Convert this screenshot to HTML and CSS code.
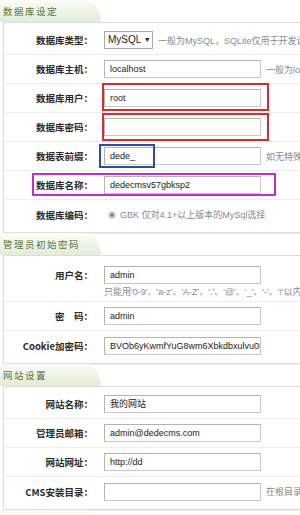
FILE: index.html
```html
<!DOCTYPE html>
<html lang="zh-CN">
<head>
    <meta charset="UTF-8">
    <meta name="viewport" content="width=device-width, initial-scale=1.0">
    <link rel="stylesheet" href="styles.css">
</head>
<body>
    <div class="page">
        <div class="sect-title"><span>数据库设定</span></div>
        <div class="panel">
            <div class="row">
                <div class="label">数据库类型：</div>
                <div class="field">
                    <span class="select">MySQL <i>▼</i></span>
                    <span class="hint">一般为MySQL，SQLite仅用于开发调试</span>
                </div>
            </div>
            <div class="row">
                <div class="label">数据库主机：</div>
                <div class="field">
                    <span class="input">localhost</span>
                    <span class="hint">一般为localhost</span>
                </div>
            </div>
            <div class="row">
                <div class="label">数据库用户：</div>
                <div class="field">
                    <span class="input">root</span>
                </div>
                <div class="mark red mark-user"></div>
            </div>
            <div class="row">
                <div class="label">数据库密码：</div>
                <div class="field">
                    <span class="input"></span>
                </div>
                <div class="mark red mark-pwd"></div>
            </div>
            <div class="row">
                <div class="label">数据表前缀：</div>
                <div class="field">
                    <span class="input">dede_</span>
                    <span class="hint">如无特殊需要,请不要修改</span>
                </div>
                <div class="mark blue mark-prefix"></div>
            </div>
            <div class="row">
                <div class="label">数据库名称：</div>
                <div class="field">
                    <span class="input">dedecmsv57gbksp2</span>
                </div>
                <div class="mark magenta mark-name"></div>
            </div>
            <div class="row last">
                <div class="label">数据库编码：</div>
                <div class="field">
                    <span class="radio"></span>
                    <span class="hint">GBK 仅对4.1+以上版本的MySql选择</span>
                </div>
            </div>
        </div>

        <div class="sect-title"><span>管理员初始密码</span></div>
        <div class="panel">
            <div class="row tall">
                <div class="label">用户名：</div>
                <div class="field stack">
                    <span class="input">admin</span>
                    <span class="hint">只能用'0-9'、'a-z'、'A-Z'、'.'、'@'、'_'、'-'、'!'以内范围的字符</span>
                </div>
            </div>
            <div class="row">
                <div class="label">密　码：</div>
                <div class="field">
                    <span class="input">admin</span>
                </div>
            </div>
            <div class="row last">
                <div class="label">Cookie加密码：</div>
                <div class="field">
                    <span class="input">BVOb6yKwmfYuG8wm6Xbkdbxulvu0I</span>
                </div>
            </div>
        </div>

        <div class="sect-title"><span>网站设置</span></div>
        <div class="panel">
            <div class="row">
                <div class="label">网站名称：</div>
                <div class="field">
                    <span class="input">我的网站</span>
                </div>
            </div>
            <div class="row">
                <div class="label">管理员邮箱：</div>
                <div class="field">
                    <span class="input">admin@dedecms.com</span>
                </div>
            </div>
            <div class="row">
                <div class="label">网站网址：</div>
                <div class="field">
                    <span class="input">http://dd</span>
                </div>
            </div>
            <div class="row last">
                <div class="label">CMS安装目录：</div>
                <div class="field">
                    <span class="input"></span>
                    <span class="hint">在根目录安装时不必理会</span>
                </div>
            </div>
        </div>

        <div class="sect-title"><span>安装测试体验数据</span></div>
    </div>
</body>
</html>
```

FILE: styles.css
```css
html, body {
    margin: 0;
    padding: 0;
    background-color: #fff;
    overflow: hidden;
}

body {
    font-family: "Liberation Sans", "Noto Sans CJK SC", sans-serif;
    font-size: 10px;
    color: #333;
}

.page {
    width: 640px;
}

.sect-title {
    height: 22px;
}

.sect-title span {
    display: block;
    width: 98px;
    height: 22px;
    line-height: 23px;
    padding-left: 3px;
    font-family: "Noto Sans CJK SC", sans-serif;
    font-size: 9.5px;
    letter-spacing: 1.5px;
    color: #58743a;
    white-space: nowrap;
    background: linear-gradient(to bottom, #fbfcf8, #e3ecd6);
    border-top-right-radius: 16px 22px;
}

.panel {
    margin-left: 3px;
    padding: 3px 0;
    border: 1px solid #dcdcdc;
    border-right: 0;
    background-color: #fff;
    box-shadow: 0 1px 1px #eee;
}

.row {
    position: relative;
    display: flex;
    align-items: center;
    height: 28px;
    border-bottom: 1px solid #ececec;
}

.row.last {
    border-bottom: 0;
    height: 29px;
}

.row.tall {
    height: 35px;
    padding-top: 7px;
    align-items: flex-start;
}

.tall .label {
    line-height: 18px;
}

.label {
    width: 89px;
    padding-right: 8px;
    text-align: right;
    font-family: "Noto Sans CJK SC", sans-serif;
    font-weight: bold;
    font-size: 9.5px;
    color: #2a2a2a;
    white-space: nowrap;
}

.field {
    display: flex;
    align-items: center;
    padding-left: 3px;
    white-space: nowrap;
}

.field.stack {
    flex-direction: column;
    align-items: flex-start;
}

.input {
    display: inline-block;
    box-sizing: border-box;
    width: 157px;
    height: 18px;
    line-height: 16px;
    padding-left: 5px;
    border: 1px solid #c8c8c8;
    border-top-color: #b4b4b4;
    border-left-color: #b4b4b4;
    background-color: #fff;
    font-size: 9px;
    color: #222;
    overflow: hidden;
}

.select {
    display: inline-block;
    box-sizing: border-box;
    width: 49px;
    height: 18px;
    line-height: 16px;
    padding-left: 3px;
    border: 1px solid #a8a8a8;
    font-size: 10px;
    color: #222;
}

.select i {
    font-style: normal;
    font-size: 7px;
    vertical-align: 1px;
}

.hint {
    margin-left: 5px;
    font-family: "Liberation Sans", "Noto Sans CJK SC", sans-serif;
    font-size: 9px;
    color: #8a8a8a;
}

.stack .hint {
    margin: 1px 0 0;
}

.radio {
    display: inline-block;
    box-sizing: border-box;
    width: 8px;
    height: 8px;
    margin-left: 4px;
    border-radius: 50%;
    border: 2px solid #d6d6d6;
    background-color: #888;
}

.radio + .hint {
    margin-left: 4px;
}

.mark {
    position: absolute;
    box-sizing: border-box;
    border: 2px solid;
}

.mark.red {
    border-color: #dd2a2a;
}

.mark.blue {
    border-color: #2c4aa8;
}

.mark.magenta {
    border-color: #c62ad2;
}

.mark-user {
    top: -1px;
    left: 98px;
    width: 167px;
    height: 28px;
}

.mark-pwd {
    top: 0;
    left: 98px;
    width: 167px;
    height: 28px;
}

.mark-prefix {
    top: 2px;
    left: 95px;
    width: 56px;
    height: 24px;
}

.mark-name {
    top: 2px;
    left: 28px;
    width: 244px;
    height: 23px;
}
```
